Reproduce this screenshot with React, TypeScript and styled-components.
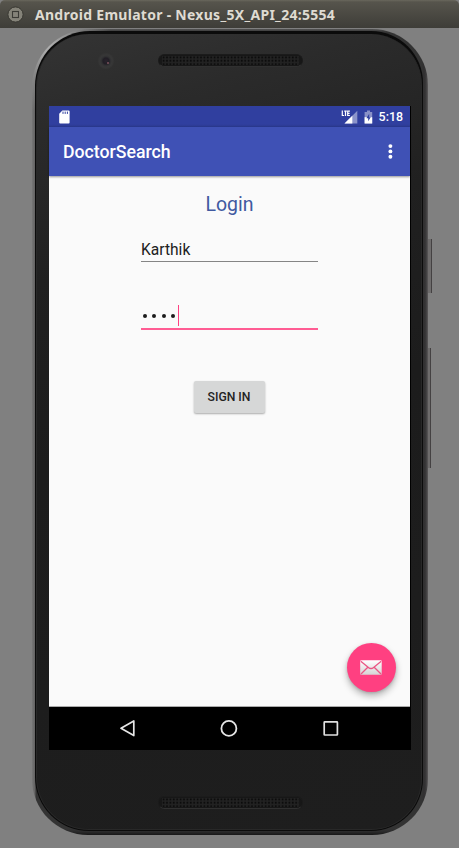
import React from "react";
import styled, { createGlobalStyle } from "styled-components";

const GlobalStyle = createGlobalStyle`
  * { box-sizing: border-box; }
  html, body { margin: 0; padding: 0; background: #808080; }
  body { width: 459px; height: 848px; overflow: hidden; }
`;

const Window = styled.div`
  width: 459px;
  height: 848px;
  background: #808080;
  display: flex;
  flex-direction: column;
  font-family: Roboto, "Liberation Sans", sans-serif;
`;

const TitleBar = styled.header`
  height: 28px;
  flex: none;
  display: flex;
  align-items: center;
  padding: 1px 0 0 7px;
  gap: 11px;
  background: linear-gradient(#69675d 0, #56544c 2px, #3e3d38 28px);
  border-radius: 5px 5px 0 0;
`;

const WindowTitle = styled.span`
  font: bold 14px/20px "Noto Sans", "Open Sans", sans-serif;
  letter-spacing: 0.28px;
  color: #dfdbd2;
  white-space: nowrap;
`;

const Phone = styled.div`
  position: relative;
  width: 396px;
  height: 806px;
  margin: 1px 0 0 32px;
  padding: 2px 5px 4px 3px;
  border-radius: 58px 56px 56px 56px;
  background:
    radial-gradient(circle at 15px 17px, #b0b0b0 0, #8a8a8a 28px, transparent 66px),
    linear-gradient(90deg, #777 0, #636262 3px, transparent 4px),
    linear-gradient(90deg, transparent 390px, #302f30 392px, #3a393a 394px, #5b595a 396px),
    linear-gradient(#555 0, #333 3px, #333 800px, #29292a 803px, #171717 806px);
`;

const SideKey = styled.span<{ $top: number; $height: number; $width: number }>`
  position: absolute;
  left: 396px;
  top: ${(p) => p.$top}px;
  height: ${(p) => p.$height}px;
  width: ${(p) => p.$width}px;
  background: #6e6c6c;
  border-right: 1px solid #444142;
`;

const Edge = styled.div`
  height: 100%;
  padding: 3px 1px 1px 1px;
  border-radius: 55px 52px 52px 54px;
  background: #0b0b0b;
`;

const Face = styled.div`
  height: 100%;
  padding-left: 12px;
  border: 1px solid #282828;
  border-top-width: 0;
  border-radius: 53px 51px 51px 53px;
  background: linear-gradient(165deg, #343434 0, #2b2b2b 90px, #202020 240px, #1c1c1c 420px, #1e1e1e 100%);
  display: flex;
  flex-direction: column;
`;

const TopBezel = styled.div`
  height: 72px;
  flex: none;
  display: flex;
  align-items: flex-start;
  padding: 19px 0 0 49px;
  gap: 43.5px;
`;

const Camera = styled.span`
  width: 16px;
  height: 16px;
  border-radius: 50%;
  background: radial-gradient(circle at 8px 8px, #29232c 0, #211e25 3px, #303032 4.5px, #373737 6px, #333 8px);
  display: flex;
  align-items: center;
  justify-content: center;
  &::after {
    content: "";
    width: 2px;
    height: 2px;
    margin: 3px 0 0 4px;
    background: #66454f;
  }
`;

const Speaker = styled.span`
  display: block;
  width: 145px;
  height: 13px;
  margin-top: 1px;
  border-radius: 7px;
  background: #171717;
  border: 1px solid #1b1b1b;
  border-bottom-color: #303030;
  padding: 1px 3px;
  svg { display: block; }
`;

const BottomBezel = styled.div`
  padding: 45px 0 0 109px;
`;

const Screen = styled.main`
  width: 362px;
  height: 644px;
  flex: none;
  display: flex;
  flex-direction: column;
  background: #000;
`;

const StatusBar = styled.div`
  height: 21px;
  flex: none;
  margin-right: 1px;
  padding: 0 7px 0 9px;
  background: linear-gradient(#303f9f 18px, #2b398e 21px);
  display: flex;
  align-items: center;
  color: #fff;
`;

const StatusIcons = styled.div`
  margin-left: auto;
  display: flex;
  align-items: center;
  gap: 6px;
`;

const Clock = styled.span`
  font-size: 12.4px;
  font-weight: 500;
  line-height: 20px;
  padding-top: 1px;
`;

const AppBar = styled.div`
  height: 49px;
  flex: none;
  margin-right: 1px;
  padding: 1px 13px 0 14px;
  background: #3f51b5;
  display: flex;
  align-items: center;
  justify-content: space-between;
  position: relative;
  z-index: 1;
  box-shadow: 0 1px 2px rgba(0, 0, 0, 0.4);
`;

const AppTitle = styled.h1`
  margin: 0;
  font-size: 17.7px;
  font-weight: 500;
  line-height: 24px;
  color: #fff;
`;

const MenuButton = styled.button`
  border: 0;
  padding: 0;
  width: 14px;
  height: 18px;
  background: none;
  svg { display: block; }
`;

const Content = styled.form`
  height: 531px;
  flex: none;
  margin-right: 1px;
  background: #fafafa;
  border-bottom: 1px solid #aaa;
  display: flex;
  flex-direction: column;
  align-items: center;
  position: relative;
`;

const Heading = styled.h2`
  margin: 17px 0 0;
  font-size: 19.5px;
  font-weight: 400;
  line-height: 24px;
  color: #4059a0;
`;

const Field = styled.div<{ $active?: boolean }>`
  width: 177px;
  height: ${(p) => (p.$active ? 25 : 21)}px;
  margin: ${(p) => (p.$active ? "43px 0 0" : "24px 0 0")};
  border-bottom: ${(p) => (p.$active ? "2px solid #ff5c93" : "1px solid #858585")};
  display: flex;
  align-items: flex-start;
  font-size: 15.6px;
  line-height: 19px;
  color: #212121;
`;

const Dots = styled.span`
  display: flex;
  gap: 5.4px;
  padding: 9px 0 0 2px;
`;

const Dot = styled.i`
  width: 4px;
  height: 4px;
  border-radius: 50%;
  background: #1c1c1c;
`;

const Caret = styled.i`
  width: 1.3px;
  height: 21px;
  margin-left: 2.4px;
  background: #ff4081;
`;

const SignIn = styled.button`
  width: 71px;
  height: 32px;
  margin: 51px 1px 0 0;
  padding: 0;
  border: 0;
  border-radius: 2px;
  background: #d6d7d7;
  box-shadow: 0 1px 2px rgba(0, 0, 0, 0.32);
  font: 500 12.2px/32px Roboto, sans-serif;
  color: #232323;
`;

const Fab = styled.button`
  position: absolute;
  right: 14.5px;
  bottom: 14px;
  width: 49px;
  height: 49px;
  padding: 0;
  border: 0;
  border-radius: 50%;
  background: #ff4081;
  box-shadow: 0 4px 7px rgba(0, 0, 0, 0.28), 0 1px 3px rgba(0, 0, 0, 0.14);
  display: flex;
  align-items: center;
  justify-content: center;
`;

const NavBar = styled.nav`
  height: 43px;
  flex: none;
  padding: 0 70px 2px 68px;
  display: flex;
  align-items: center;
  justify-content: space-between;
`;

function Grille({ id }: { id: string }) {
  return (
    <svg width="137" height="9">
      <defs>
        <pattern id={id} width="3.4" height="3.4" patternUnits="userSpaceOnUse">
          <rect width="3.4" height="3.4" fill="#222" />
          <rect x="0.7" y="0.5" width="1.7" height="1.7" fill="#080808" />
        </pattern>
      </defs>
      <rect width="137" height="9" fill={`url(#${id})`} />
    </svg>
  );
}

const CloseIcon = () => (
  <svg width="17" height="17" viewBox="0 0 17 17">
    <circle cx="8.5" cy="8.5" r="7.6" fill="#858379" stroke="#393832" strokeWidth="1" />
    <rect x="5.5" y="5.5" width="6" height="6" fill="none" stroke="#3c3b36" strokeWidth="1.1" />
  </svg>
);

const SdCardIcon = () => (
  <svg width="12" height="14" viewBox="0 0 12 14">
    <path d="M4.4.5h6.2q1 0 1 1v11q0 1-1 1H2.2q-1 0-1-1V3.8z" fill="#fff" />
    <path d="M5 1.6v2.3M7.2 1.6v2.3M9.4 1.6v2.3" stroke="#303f9f" strokeWidth="1" />
  </svg>
);

const SignalIcon = () => (
  <svg width="17" height="14" viewBox="0 0 17 14">
    <path d="M16.3.7v12.8H3.5z" fill="#8b94ca" />
    <path d="M11.3 5.7v7.8H3.5z" fill="#fff" />
    <path d="M0 0h9v7H0z" fill="#303f9f" />
    <path d="M1.3.5v5h1.8M3.2 1.1h2.6M4.5 1.1v5M8.9 1.1H6.7v4.4h2.2M6.7 3.3h1.9" fill="none" stroke="#fff" strokeWidth="1.2" />
  </svg>
);

const BatteryIcon = () => (
  <svg width="9" height="14" viewBox="0 0 9 14">
    <path d="M3 .5h3V2h2.2v11.5H.6V2H3z" fill="#8991c7" />
    <path d="M.6 7.2h7.6v6.3H.6z" fill="#fff" />
    <path d="M5.2 3.8 2.4 8.2h1.8v3l2.5-4H5.2z" fill="#303f9f" />
  </svg>
);

const EnvelopeIcon = () => (
  <svg width="24" height="17" viewBox="0 0 24 17">
    <defs>
      <linearGradient id="paper" x1="0" y1="0" x2="0" y2="1">
        <stop offset="0" stopColor="#fff" />
        <stop offset="1" stopColor="#d5d5d5" />
      </linearGradient>
    </defs>
    <rect x="1.2" y="1.2" width="21.5" height="14.5" rx="1" fill="url(#paper)" />
    <path d="m1.8 2.2 7.6 6.2q2.6 2.3 5.2 0l7.6-6.2M2 15l6.8-6.8M22 15l-6.8-6.8" fill="none" stroke="#ea5684" strokeWidth="1.3" />
  </svg>
);

export default function App() {
  return (
    <>
      <GlobalStyle />
      <Window>
        <TitleBar>
          <CloseIcon />
          <WindowTitle>Android Emulator - Nexus_5X_API_24:5554</WindowTitle>
        </TitleBar>
        <Phone>
          <SideKey $top={210} $height={54} $width={4} />
          <SideKey $top={319} $height={120} $width={3} />
          <Edge>
            <Face>
              <TopBezel>
                <Camera />
                <Speaker><Grille id="earpiece" /></Speaker>
              </TopBezel>
              <Screen>
                <StatusBar>
                  <SdCardIcon />
                  <StatusIcons>
                    <SignalIcon />
                    <BatteryIcon />
                    <Clock>5:18</Clock>
                  </StatusIcons>
                </StatusBar>
                <AppBar>
                  <AppTitle>DoctorSearch</AppTitle>
                  <MenuButton type="button" aria-label="More options">
                    <svg width="14" height="18" fill="#fff">
                      <circle cx="7.4" cy="3.1" r="1.95" />
                      <circle cx="7.4" cy="8.4" r="1.95" />
                      <circle cx="7.4" cy="13.7" r="1.95" />
                    </svg>
                  </MenuButton>
                </AppBar>
                <Content>
                  <Heading>Login</Heading>
                  <Field>Karthik</Field>
                  <Field $active>
                    <Dots><Dot /><Dot /><Dot /><Dot /></Dots>
                    <Caret />
                  </Field>
                  <SignIn type="button">SIGN IN</SignIn>
                  <Fab type="button" aria-label="Mail"><EnvelopeIcon /></Fab>
                </Content>
                <NavBar>
                  <svg width="20" height="20" fill="none" stroke="#e6e6e6" strokeWidth="1.7" strokeLinejoin="round">
                    <path d="M16.8 3v14.6L4 10.3z" />
                  </svg>
                  <svg width="20" height="20" fill="none" stroke="#e6e6e6" strokeWidth="1.8">
                    <circle cx="9.9" cy="10.4" r="7.5" />
                  </svg>
                  <svg width="20" height="20" fill="none" stroke="#e0e0e0" strokeWidth="1.7">
                    <rect x="3.2" y="3.8" width="13.2" height="13.2" rx="0.6" />
                  </svg>
                </NavBar>
              </Screen>
              <BottomBezel>
                <Speaker><Grille id="mouthpiece" /></Speaker>
              </BottomBezel>
            </Face>
          </Edge>
        </Phone>
      </Window>
    </>
  );
}
